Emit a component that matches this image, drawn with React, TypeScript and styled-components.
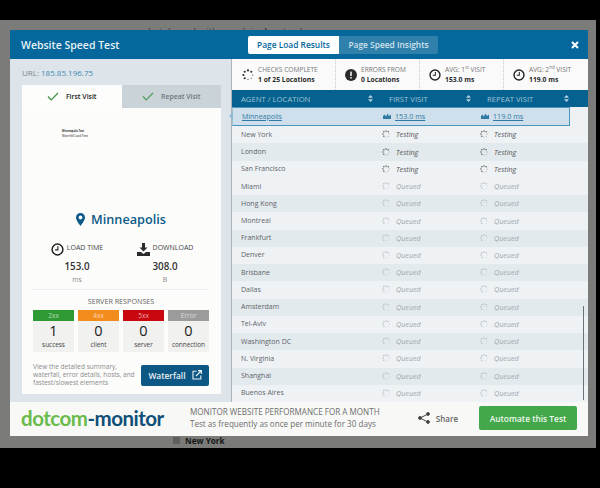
import styled, { createGlobalStyle } from "styled-components";

const GlobalStyle = createGlobalStyle`
  html, body {
    margin: 0;
    padding: 0;
    background: #000;
    font-family: "Open Sans", "Liberation Sans", sans-serif;
  }
`;

const Page = styled.div`
  width: 600px;
  height: 488px;
  overflow: hidden;
  background: #000;
  padding-top: 20px;
  box-sizing: border-box;
`;

const Backdrop = styled.div`
  width: 596px;
  height: 428px;
  background: #7b7b7a;
  padding-left: 10px;
  box-sizing: border-box;
  color: #1d1d1d;
`;

const PeekTop = styled.div`
  height: 10px;
  overflow: hidden;
  padding-left: 138px;
  font-size: 10px;
  line-height: 24px;
  color: #3c3c3c;
`;

const PeekBottom = styled.div`
  height: 12px;
  display: flex;
  align-items: flex-start;
  padding-left: 163px;
  gap: 5px;
  font-size: 8.2px;
  line-height: 9px;
  font-weight: 700;
  color: #151515;
`;

const PeekBox = styled.span`
  width: 7px;
  height: 7px;
  margin-top: 1px;
  background: #5f5f5f;
`;

const Modal = styled.div`
  width: 578px;
  height: 406px;
  display: flex;
  flex-direction: column;
  background: #dfe6ea;
`;

const Header = styled.header`
  height: 29px;
  flex: none;
  display: flex;
  align-items: center;
  background: #05679c;
  padding: 0 9px 0 11px;
  box-sizing: border-box;
`;

const Title = styled.h1`
  width: 227px;
  margin: 0;
  font-size: 10.5px;
  font-weight: 600;
  color: #e6f0f5;
`;

const HeaderTab = styled.div<{ $active?: boolean }>`
  height: 18px;
  width: ${(p) => (p.$active ? "91px" : "99px")};
  display: flex;
  align-items: center;
  justify-content: center;
  font-size: 8.4px;
  font-weight: 600;
  border-radius: ${(p) => (p.$active ? "2px 0 0 2px" : "0 2px 2px 0")};
  background: ${(p) => (p.$active ? "#fff" : "#2f80ab")};
  color: ${(p) => (p.$active ? "#05679c" : "#cfe2ec")};
`;

const Close = styled.button`
  margin-left: auto;
  padding: 0;
  border: 0;
  background: none;
  display: flex;
  color: #fff;
`;

const Body = styled.div`
  flex: 1;
  min-height: 0;
  display: flex;
`;

const LeftPanel = styled.aside`
  width: 222px;
  flex: none;
  box-sizing: border-box;
  padding: 0 10px 8px 12px;
  background: #dde5ea;
  border-right: 1px solid #a9b6be;
  display: flex;
  flex-direction: column;
`;

const UrlLine = styled.div`
  height: 26px;
  display: flex;
  align-items: center;
  gap: 2px;
  font-size: 8px;
  color: #7c858b;
`;

const UrlValue = styled.span`
  color: #3f8bb5;
`;

const VisitTabs = styled.div`
  height: 23px;
  flex: none;
  display: flex;
`;

const VisitTab = styled.div<{ $active?: boolean }>`
  flex: 1;
  display: flex;
  align-items: center;
  justify-content: center;
  gap: 7px;
  font-size: 6.9px;
  font-weight: 600;
  background: ${(p) => (p.$active ? "#fdfdfc" : "#c9d3d8")};
  color: ${(p) => (p.$active ? "#222" : "#6d777c")};
`;

const Card = styled.div`
  flex: 1;
  min-height: 0;
  background: #fcfcfb;
  display: flex;
  flex-direction: column;
  padding: 0 12px 0 11px;
`;

const Thumb = styled.div`
  height: 99px;
  flex: none;
  padding: 21px 0 0 29px;
  box-sizing: border-box;
  font-size: 2.6px;
  line-height: 5px;
  font-weight: 700;
  color: #444;
`;

const ThumbLine = styled.div<{ $light?: boolean }>`
  color: ${(p) => (p.$light ? "#777" : "#333")};
`;

const City = styled.div`
  height: 24px;
  flex: none;
  display: flex;
  align-items: center;
  justify-content: center;
  gap: 6px;
  font-size: 12.7px;
  font-weight: 600;
  color: #0b5a88;
`;

const Metrics = styled.div`
  margin-top: 12px;
  height: 46px;
  flex: none;
  display: grid;
  grid-template-columns: 1fr 1fr;
  border-bottom: 1px solid #eceff1;
`;

const Metric = styled.div`
  display: flex;
  flex-direction: column;
  align-items: center;
`;

const MetricHead = styled.div`
  height: 13px;
  display: flex;
  align-items: flex-start;
  gap: 3px;
  font-size: 7px;
  line-height: 10px;
  color: #444;
`;

const MetricValue = styled.div`
  margin-top: 4px;
  font-size: 9.8px;
  line-height: 13px;
  font-weight: 600;
  color: #333;
`;

const MetricUnit = styled.div`
  margin-top: 2px;
  font-size: 6.8px;
  line-height: 10px;
  color: #8a8a8a;
`;

const ResponsesTitle = styled.div`
  margin-top: 6px;
  text-align: center;
  font-size: 7.2px;
  line-height: 11px;
  color: #666;
`;

const Responses = styled.div`
  margin-top: 3px;
  display: grid;
  grid-template-columns: repeat(4, 41px);
  column-gap: 4px;
`;

const Response = styled.div`
  height: 42px;
  background: #f1f1f0;
  display: flex;
  flex-direction: column;
  align-items: center;
`;

const ResponseBadge = styled.div<{ $color: string }>`
  width: 100%;
  height: 11px;
  background: ${(p) => p.$color};
  color: rgba(255, 255, 255, 0.65);
  text-align: center;
  font-size: 6.6px;
  line-height: 11px;
`;

const ResponseCount = styled.div`
  margin-top: 1px;
  font-size: 14.5px;
  line-height: 18px;
  color: #222;
`;

const ResponseLabel = styled.div`
  font-size: 6.4px;
  line-height: 9px;
  color: #444;
`;

const CardFoot = styled.div`
  margin-top: 11px;
  display: flex;
  justify-content: space-between;
  align-items: center;
`;

const FootNote = styled.p`
  margin: 0;
  white-space: nowrap;
  font-size: 6.5px;
  line-height: 8.2px;
  color: #8b8b8b;
`;

const WaterfallButton = styled.button`
  width: 68px;
  height: 21px;
  border: 0;
  padding: 0;
  border-radius: 2px;
  background: #0c5783;
  color: #eaf1f5;
  display: flex;
  align-items: center;
  justify-content: center;
  gap: 6px;
  font-family: inherit;
  font-size: 8.4px;
  font-weight: 600;
`;

const RightPanel = styled.section`
  flex: 1;
  min-width: 0;
  display: flex;
  flex-direction: column;
  background: #edf1f3;
`;

const Summary = styled.div`
  height: 31px;
  flex: none;
  display: grid;
  grid-template-columns: 104px 84px 84px 84px;
  background: #fafafa;
`;

const SummaryCell = styled.div`
  display: flex;
  align-items: center;
  gap: 4px;
  padding-left: 9px;
  border-right: 1px dotted #c9cdd0;
  &:first-child {
    padding-left: 10px;
  }
  &:last-child {
    border-right: 0;
  }
`;

const SummaryText = styled.div`
  white-space: nowrap;
  font-size: 6.6px;
  line-height: 10px;
  color: #767676;
  sup {
    font-size: 4.5px;
    line-height: 0;
  }
`;

const SummaryValue = styled.div`
  font-size: 6.8px;
  font-weight: 700;
  color: #2a2a2a;
`;

const TableHead = styled.div`
  height: 17px;
  flex: none;
  display: grid;
  grid-template-columns: 148px 98px 98px 12px;
  align-items: center;
  background: #05618f;
  font-size: 7.7px;
  color: #9fc3d6;
`;

const HeadCell = styled.div`
  display: flex;
  align-items: center;
  justify-content: space-between;
  padding: 0 7px 0 9px;
`;

const Rows = styled.div`
  position: relative;
  flex: 1;
  min-height: 0;
  display: flex;
  flex-direction: column;
`;

const Row = styled.div<{ $even: boolean }>`
  flex: 1;
  display: grid;
  grid-template-columns: 148px 98px 98px;
  align-items: center;
  padding-bottom: 1px;
  background: ${(p) => (p.$even ? "#e3eaee" : "#eef2f5")};
`;

const ActiveRow = styled(Row)`
  position: relative;
  width: 338px;
  box-sizing: border-box;
  background: #cfdfeb;
  border: 1px solid #4b94bd;
  border-left-color: #9fc3d8;
  &::before {
    content: "";
    position: absolute;
    left: -4px;
    top: 4px;
    border-style: solid;
    border-width: 4px 4px 4px 0;
    border-color: transparent #8fb9d1 transparent transparent;
  }
`;

const Agent = styled.div<{ $link?: boolean }>`
  padding-left: 9px;
  font-size: 7px;
  color: ${(p) => (p.$link ? "#2f7ba6" : "#5d6469")};
  text-decoration: ${(p) => (p.$link ? "underline" : "none")};
`;

const Cell = styled.div<{ $status: "done" | "testing" | "queued" }>`
  display: flex;
  align-items: center;
  gap: ${(p) => (p.$status === "done" ? "4px" : "6px")};
  padding-left: 2px;
  font-size: 7.2px;
  font-style: ${(p) => (p.$status === "done" ? "normal" : "italic")};
  color: ${(p) =>
    p.$status === "done" ? "#2f7ba6" : p.$status === "testing" ? "#555" : "#a3a9ad"};
  text-decoration: ${(p) => (p.$status === "done" ? "underline" : "none")};
`;

const ScrollThumb = styled.div`
  position: absolute;
  right: 4px;
  top: 199px;
  width: 1px;
  height: 94px;
  background: #6a7378;
`;

const Footer = styled.footer`
  height: 34px;
  flex: none;
  display: flex;
  align-items: center;
  padding: 0 11px 2px 11px;
  box-sizing: border-box;
  background: #f8f8f7;
`;

const Logo = styled.div`
  width: 169px;
  flex: none;
  display: flex;
  font-family: "Lato", "Open Sans", sans-serif;
  font-size: 20.5px;
  font-weight: 700;
  letter-spacing: -0.5px;
  color: #0f4f78;
`;

const LogoGreen = styled.span`
  color: #6bbb4c;
`;

const Promo = styled.div`
  flex: 1;
  font-size: 8.1px;
  line-height: 12px;
  color: #6d6d6d;
`;

const PromoLead = styled.div`
  white-space: nowrap;
`;

const Share = styled.div`
  display: flex;
  align-items: center;
  gap: 6px;
  margin-right: 21px;
  font-size: 8px;
  font-weight: 600;
  color: #666;
`;

const AutomateButton = styled.button`
  width: 98px;
  height: 24px;
  border: 0;
  padding: 0;
  border-radius: 2px;
  background: #43a84a;
  color: #eef7ee;
  font-family: inherit;
  font-size: 8.4px;
  font-weight: 600;
`;

const Spinner = ({ color = "#555", size = 8 }: { color?: string; size?: number }) => (
  <svg width={size} height={size} viewBox="0 0 12 12" fill={color}>
    {[0, 45, 90, 135, 180, 225, 270, 315].map((a, i) => (
      <circle
        key={a}
        cx={6 + 4.6 * Math.cos((a * Math.PI) / 180)}
        cy={6 + 4.6 * Math.sin((a * Math.PI) / 180)}
        r={i < 3 ? 0.6 : 1.1}
      />
    ))}
  </svg>
);

const ClockIcon = ({ size = 13 }: { size?: number }) => (
  <svg width={size} height={size} viewBox="0 0 14 14" fill="none" stroke="#222">
    <circle cx="7" cy="7" r="5.8" strokeWidth="1.6" />
    <path d="M7.4 3.6V7.4H4.4" strokeWidth="1.2" />
  </svg>
);

const AlertIcon = () => (
  <svg width="12" height="12" viewBox="0 0 12 12">
    <circle cx="6" cy="6" r="6" fill="#2b2b2b" />
    <rect x="5.2" y="2.6" width="1.6" height="4.4" fill="#eee" />
    <rect x="5.2" y="8" width="1.6" height="1.5" fill="#eee" />
  </svg>
);

const CheckIcon = ({ color }: { color: string }) => (
  <svg width="12" height="9" viewBox="0 0 12 9" fill="none" stroke={color} strokeWidth="1.2">
    <path d="M1 4.5L4.2 8L11 1" />
  </svg>
);

const PinIcon = () => (
  <svg width="9" height="13" viewBox="0 0 9 13">
    <path
      fillRule="evenodd"
      fill="#0b5a88"
      d="M4.5 0C2 0 0 2 0 4.5C0 7.5 4.5 13 4.5 13S9 7.5 9 4.5C9 2 7 0 4.5 0ZM4.5 2.6A1.9 1.9 0 1 1 4.5 6.4A1.9 1.9 0 0 1 4.5 2.6Z"
    />
  </svg>
);

const DownloadIcon = () => (
  <svg width="13" height="13" viewBox="0 0 13 13" fill="#2b2b2b">
    <path d="M5 0H8V4.5H10.5L6.5 8.6L2.5 4.5H5Z" />
    <path d="M0 9H4L6.5 11L9 9H13V13H0Z" />
  </svg>
);

const SortIcon = () => (
  <svg width="5" height="7" viewBox="0 0 5 7" fill="#b7d2e0">
    <path d="M2.5 0L5 2.8H0Z" />
    <path d="M2.5 7L0 4.2H5Z" />
  </svg>
);

const BarsIcon = () => (
  <svg width="8" height="6" viewBox="0 0 8 6" fill="#2f7ba6">
    <path d="M0 6V3L1.5 1.5L3 3.5L4.5 0.5L6 3L8 1.5V6Z" />
  </svg>
);

const ShareIcon = () => (
  <svg width="12" height="12" viewBox="0 0 12 12" fill="#444" stroke="#444" strokeWidth="1">
    <path d="M10 2L2 6L10 10" fill="none" />
    <circle cx="10" cy="2" r="1.4" />
    <circle cx="2" cy="6" r="1.4" />
    <circle cx="10" cy="10" r="1.4" />
  </svg>
);

const ExternalIcon = () => (
  <svg width="10" height="10" viewBox="0 0 10 10" fill="none" stroke="#eaf1f5" strokeWidth="1.1">
    <path d="M4.5 1.2H1V9H8.8V5.5" />
    <path d="M4 6L9 1M6 .6H9.4V4" />
  </svg>
);

const CloseIcon = () => (
  <svg width="8" height="8" viewBox="0 0 8 8" stroke="#fff" strokeWidth="2">
    <path d="M1 1L7 7M7 1L1 7" />
  </svg>
);

const responses = [
  { code: "2xx", color: "#2f9a33", count: 1, label: "success" },
  { code: "4xx", color: "#f28c1c", count: 0, label: "client" },
  { code: "5xx", color: "#c8070f", count: 0, label: "server" },
  { code: "Error", color: "#9b9b9b", count: 0, label: "connection" },
];

const testing = ["New York", "London", "San Francisco"];
const queued = [
  "Miami",
  "Hong Kong",
  "Montreal",
  "Frankfurt",
  "Denver",
  "Brisbane",
  "Dallas",
  "Amsterdam",
  "Tel-Aviv",
  "Washington DC",
  "N. Virginia",
  "Shanghai",
  "Buenos Aires",
];

const App = () => {
  return (
    <Page>
      <GlobalStyle />
      <Backdrop>
        <PeekTop>Lately and with a web in Amsterdam</PeekTop>
        <Modal>
          <Header>
            <Title>Website Speed Test</Title>
            <HeaderTab $active>Page Load Results</HeaderTab>
            <HeaderTab>Page Speed Insights</HeaderTab>
            <Close>
              <CloseIcon />
            </Close>
          </Header>
          <Body>
            <LeftPanel>
              <UrlLine>
                URL: <UrlValue>185.85.196.75</UrlValue>
              </UrlLine>
              <VisitTabs>
                <VisitTab $active>
                  <CheckIcon color="#3f8f3f" />
                  First Visit
                </VisitTab>
                <VisitTab>
                  <CheckIcon color="#4f9a58" />
                  Repeat Visit
                </VisitTab>
              </VisitTabs>
              <Card>
                <Thumb>
                  <ThumbLine>Minneapolis Test</ThumbLine>
                  <ThumbLine $light>Waterfall Load Time</ThumbLine>
                </Thumb>
                <City>
                  <PinIcon />
                  Minneapolis
                </City>
                <Metrics>
                  <Metric>
                    <MetricHead>
                      <ClockIcon />
                      LOAD TIME
                    </MetricHead>
                    <MetricValue>153.0</MetricValue>
                    <MetricUnit>ms</MetricUnit>
                  </Metric>
                  <Metric>
                    <MetricHead>
                      <DownloadIcon />
                      DOWNLOAD
                    </MetricHead>
                    <MetricValue>308.0</MetricValue>
                    <MetricUnit>B</MetricUnit>
                  </Metric>
                </Metrics>
                <ResponsesTitle>SERVER RESPONSES</ResponsesTitle>
                <Responses>
                  {responses.map((r) => (
                    <Response key={r.code}>
                      <ResponseBadge $color={r.color}>{r.code}</ResponseBadge>
                      <ResponseCount>{r.count}</ResponseCount>
                      <ResponseLabel>{r.label}</ResponseLabel>
                    </Response>
                  ))}
                </Responses>
                <CardFoot>
                  <FootNote>
                    View the detailed summary,
                    <br />
                    waterfall, error details, hosts, and
                    <br />
                    fastest/slowest elements
                  </FootNote>
                  <WaterfallButton>
                    Waterfall
                    <ExternalIcon />
                  </WaterfallButton>
                </CardFoot>
              </Card>
            </LeftPanel>
            <RightPanel>
              <Summary>
                <SummaryCell>
                  <Spinner color="#333" size={12} />
                  <SummaryText>
                    CHECKS COMPLETE
                    <SummaryValue>1 of 25 Locations</SummaryValue>
                  </SummaryText>
                </SummaryCell>
                <SummaryCell>
                  <AlertIcon />
                  <SummaryText>
                    ERRORS FROM
                    <SummaryValue>0 Locations</SummaryValue>
                  </SummaryText>
                </SummaryCell>
                <SummaryCell>
                  <ClockIcon size={12} />
                  <SummaryText>
                    AVG: 1<sup>st</sup> VISIT
                    <SummaryValue>153.0 ms</SummaryValue>
                  </SummaryText>
                </SummaryCell>
                <SummaryCell>
                  <ClockIcon size={12} />
                  <SummaryText>
                    AVG: 2<sup>nd</sup> VISIT
                    <SummaryValue>119.0 ms</SummaryValue>
                  </SummaryText>
                </SummaryCell>
              </Summary>
              <TableHead>
                <HeadCell>
                  AGENT / LOCATION
                  <SortIcon />
                </HeadCell>
                <HeadCell>
                  FIRST VISIT
                  <SortIcon />
                </HeadCell>
                <HeadCell>
                  REPEAT VISIT
                  <SortIcon />
                </HeadCell>
              </TableHead>
              <Rows>
                <ActiveRow $even={false}>
                  <Agent $link>Minneapolis</Agent>
                  <Cell $status="done">
                    <BarsIcon />
                    153.0 ms
                  </Cell>
                  <Cell $status="done">
                    <BarsIcon />
                    119.0 ms
                  </Cell>
                </ActiveRow>
                {testing.map((name, i) => (
                  <Row key={name} $even={i % 2 === 1}>
                    <Agent>{name}</Agent>
                    <Cell $status="testing">
                      <Spinner />
                      Testing
                    </Cell>
                    <Cell $status="testing">
                      <Spinner />
                      Testing
                    </Cell>
                  </Row>
                ))}
                {queued.map((name, i) => (
                  <Row key={name} $even={i % 2 === 1}>
                    <Agent>{name}</Agent>
                    <Cell $status="queued">
                      <Spinner color="#b3b8bb" />
                      Queued
                    </Cell>
                    <Cell $status="queued">
                      <Spinner color="#b3b8bb" />
                      Queued
                    </Cell>
                  </Row>
                ))}
                <ScrollThumb />
              </Rows>
            </RightPanel>
          </Body>
          <Footer>
            <Logo>
              <LogoGreen>dotcom</LogoGreen>-monitor
            </Logo>
            <Promo>
              <PromoLead>MONITOR WEBSITE PERFORMANCE FOR A MONTH</PromoLead>
              <PromoLead>Test as frequently as once per minute for 30 days</PromoLead>
            </Promo>
            <Share>
              <ShareIcon />
              Share
            </Share>
            <AutomateButton>Automate this Test</AutomateButton>
          </Footer>
        </Modal>
        <PeekBottom>
          <PeekBox />
          New York
        </PeekBottom>
      </Backdrop>
    </Page>
  );
};

export default App;
